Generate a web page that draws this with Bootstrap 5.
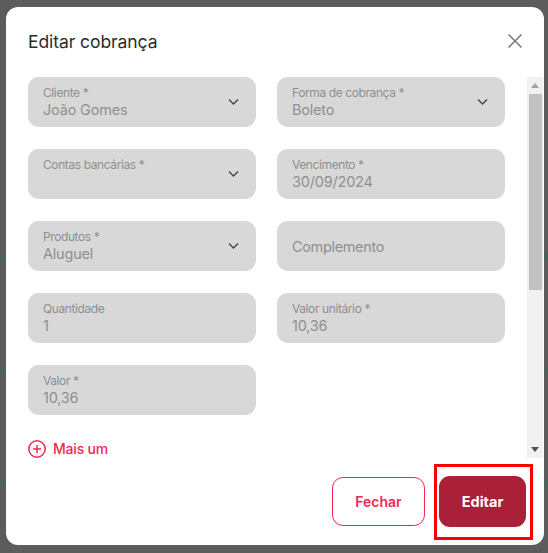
<!DOCTYPE html>
<html lang="pt">
<head>
    <meta charset="UTF-8">
    <title>Editar cobrança</title>
    <link href="https://cdn.jsdelivr.net/npm/bootstrap@5.3.3/dist/css/bootstrap.min.css" rel="stylesheet">
    <style>
        html, body { height: 100%; }
        body {
            background-color: #5c5c5c;
            background-image: linear-gradient(#4f625a, #4f625a), linear-gradient(#4f625a, #4f625a), linear-gradient(#4f625a, #4f625a);
            background-size: 100% 9px;
            background-position: 0 252px, 0 366px, 0 480px;
            background-repeat: no-repeat;
            font-family: Inter, "Noto Sans", sans-serif;
            overflow: hidden;
        }
        .sheet { width: 538px; height: 538px; margin: 7px 0 0 6px; background: #fff; border-radius: 12px; }
        .sheet-head { height: 70px; padding: 24px 22px 0 22px; }
        .sheet-head h1 { font-size: 17.5px; font-weight: 400; letter-spacing: -.08px; color: #2b2b2b; margin: 0; }
        .close-x { width: 14px; height: 14px; margin-top: 3px; }
        .scroll-area { height: 381px; }
        .fields { width: 478px; margin-left: 22px; display: grid; grid-template-columns: 228px 228px; column-gap: 21px; row-gap: 22px; }
        .field { height: 50px; background: #d8d8d8; border-radius: 11px; padding: 8px 15px 0; position: relative; color: #8f8f8f; }
        .field label { display: block; font-size: 12px; line-height: 15px; letter-spacing: -.4px; }
        .field div { font-size: 14.5px; line-height: 20px; letter-spacing: -.2px; }
        .field .lone { line-height: 50px; margin-top: -8px; padding-top: 1px; letter-spacing: -.35px; }
        .chev { position: absolute; right: 17px; top: 21px; width: 11px; height: 8px; }
        .more { margin: 23px 0 0 22px; color: #f5274f; font-size: 14px; font-weight: 500; letter-spacing: -.2px; gap: 7px; }
        .rail { width: 16px; margin-right: 1px; background: #f1f1f1; }
        .rail-arrow { height: 17px; }
        .rail-thumb { height: 196px; margin: 0 1px 0 2px; background: #c1c1c1; }
        .sheet-foot { padding: 6px 11px 0 0; gap: 9px; }
        .btn-back, .btn-edit { font-size: 14px; font-weight: 600; border-radius: 11px; padding: 0; }
        .btn-back { width: 93px; height: 49px; margin-top: 13px; border: 1px solid #f5274f; color: #f5274f; background: #fff; }
        .btn-edit { width: 87px; height: 51px; background: #ab2039; color: #fff; border: 0; font-size: 14.5px; font-weight: 700; }
        .mark-box { border: 3px solid #f00; padding: 9px 4px 10px 2px; }
    </style>
</head>
<body>
    <div class="sheet d-flex flex-column">
        <div class="sheet-head d-flex justify-content-between align-items-start">
            <h1>Editar cobrança</h1>
            <svg class="close-x" viewBox="0 0 14 14"><path d="M.5.5l13 13M13.5.5l-13 13" stroke="#777" stroke-width="1.5" fill="none"/></svg>
        </div>
        <div class="scroll-area d-flex justify-content-between">
            <div>
                <div class="fields">
                    <div class="field"><label>Cliente *</label><div>João Gomes</div>
                        <svg class="chev" viewBox="0 0 11 8"><path d="M1 1.5L5.5 6 10 1.500" stroke="#444" stroke-width="1.4" fill="none"/></svg></div>
                    <div class="field"><label>Forma de cobrança *</label><div>Boleto</div>
                        <svg class="chev" viewBox="0 0 11 8"><path d="M1 1.5L5.5 6 10 1.500" stroke="#444" stroke-width="1.4" fill="none"/></svg></div>
                    <div class="field"><label>Contas bancárias *</label>
                        <svg class="chev" viewBox="0 0 11 8"><path d="M1 1.5L5.5 6 10 1.500" stroke="#444" stroke-width="1.4" fill="none"/></svg></div>
                    <div class="field"><label>Vencimento *</label><div>30/09/2024</div></div>
                    <div class="field"><label>Produtos *</label><div>Aluguel</div>
                        <svg class="chev" viewBox="0 0 11 8"><path d="M1 1.5L5.5 6 10 1.500" stroke="#444" stroke-width="1.4" fill="none"/></svg></div>
                    <div class="field"><div class="lone">Complemento</div></div>
                    <div class="field"><label>Quantidade</label><div>1</div></div>
                    <div class="field"><label>Valor unitário *</label><div>10,36</div></div>
                    <div class="field"><label>Valor *</label><div>10,36</div></div>
                </div>
                <div class="more d-flex align-items-center">
                    <svg width="18" height="18" viewBox="0 0 18 18"><circle cx="9" cy="9" r="8.200" stroke="#f5274f" stroke-width="1.500" fill="none"/><path d="M5 9h8M9 5v8" stroke="#f5274f" stroke-width="1.500"/></svg>
                    <span>Mais um</span>
                </div>
            </div>
            <div class="rail d-flex flex-column">
                <div class="rail-arrow d-flex justify-content-center align-items-center"><svg width="8" height="5" viewBox="0 0 8 5"><path d="M4 0l4 5H0z" fill="#a3a3a3"/></svg></div>
                <div class="rail-thumb"></div>
                <div class="flex-grow-1"></div>
                <div class="rail-arrow d-flex justify-content-center align-items-center"><svg width="8" height="5" viewBox="0 0 8 5"><path d="M0 0h8L4 5z" fill="#505050"/></svg></div>
            </div>
        </div>
        <div class="sheet-foot d-flex justify-content-end align-items-start">
            <button class="btn btn-back" type="button">Fechar</button>
            <div class="mark-box"><button class="btn btn-edit" type="button">Editar</button></div>
        </div>
    </div>
    <script src="https://cdn.jsdelivr.net/npm/bootstrap@5.3.3/dist/js/bootstrap.bundle.min.js"></script>
</body>
</html>
